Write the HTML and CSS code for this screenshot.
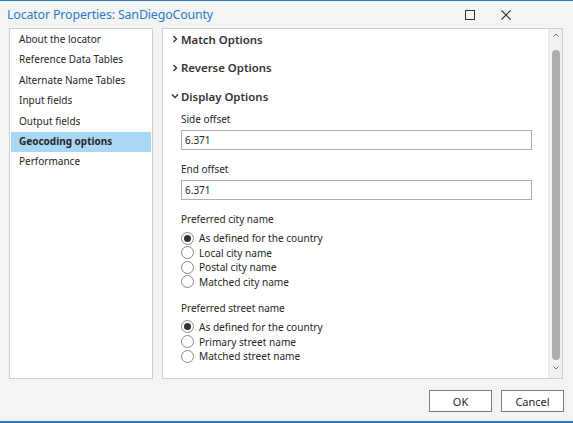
FILE: index.html
```html
<!DOCTYPE html>
<html>
<head>
<meta charset="utf-8">
<link rel="stylesheet" href="styles.css">
</head>
<body>
<div class="window">
  <div class="titlebar">
    <div class="title">Locator Properties: SanDiegoCounty</div>
    <div class="controls">
      <svg class="ctl" width="10" height="10" viewBox="0 0 10 10"><rect x="0.5" y="0.5" width="9" height="9" fill="none" stroke="#333" stroke-width="1"/></svg>
      <svg class="ctl close" width="10" height="10" viewBox="0 0 10 10"><path d="M0.5 0.5 L9.5 9.5 M9.5 0.5 L0.5 9.5" stroke="#333" stroke-width="1.1" fill="none"/></svg>
    </div>
  </div>
  <div class="main">
    <ul class="nav">
      <li>About the locator</li>
      <li>Reference Data Tables</li>
      <li>Alternate Name Tables</li>
      <li>Input fields</li>
      <li>Output fields</li>
      <li class="selected">Geocoding options</li>
      <li>Performance</li>
    </ul>
    <div class="content">
      <div class="scrollarea">
        <div class="section"><svg class="chev" width="8" height="8" viewBox="0 0 8 8"><path d="M2.5 1 L5.5 4 L2.5 7" stroke="#333" stroke-width="1.4" fill="none"/></svg>Match Options</div>
        <div class="section"><svg class="chev" width="8" height="8" viewBox="0 0 8 8"><path d="M2.5 1 L5.5 4 L2.5 7" stroke="#333" stroke-width="1.4" fill="none"/></svg>Reverse Options</div>
        <div class="section"><svg class="chev" width="8" height="8" viewBox="0 0 8 8"><path d="M1 2.5 L4 5.5 L7 2.5" stroke="#333" stroke-width="1.4" fill="none"/></svg>Display Options</div>
        <div class="group">
          <div class="label first">Side offset</div>
          <div class="input">6.371</div>
          <div class="label">End offset</div>
          <div class="input">6.371</div>
          <div class="label">Preferred city name</div>
          <div class="radios">
            <div class="radio checked"><span class="dot"></span>As defined for the country</div>
            <div class="radio"><span class="dot"></span>Local city name</div>
            <div class="radio"><span class="dot"></span>Postal city name</div>
            <div class="radio"><span class="dot"></span>Matched city name</div>
          </div>
          <div class="label after-radios">Preferred street name</div>
          <div class="radios">
            <div class="radio checked"><span class="dot"></span>As defined for the country</div>
            <div class="radio"><span class="dot"></span>Primary street name</div>
            <div class="radio"><span class="dot"></span>Matched street name</div>
          </div>
        </div>
      </div>
      <div class="scrollbar">
        <svg class="arrow" width="8" height="6" viewBox="0 0 8 6"><path d="M1.5 4.5 L4 2 L6.5 4.5" stroke="#777" stroke-width="1" fill="none"/></svg>
        <div class="thumb"></div>
        <svg class="arrow" width="8" height="6" viewBox="0 0 8 6"><path d="M1.5 1.5 L4 4 L6.5 1.5" stroke="#777" stroke-width="1" fill="none"/></svg>
      </div>
    </div>
  </div>
  <div class="footer">
    <button class="btn">OK</button>
    <button class="btn">Cancel</button>
  </div>
</div>
</body>
</html>
```
FILE: styles.css
```css
* { box-sizing: border-box; }
html, body { margin: 0; padding: 0; }
body {
  width: 573px;
  height: 423px;
  overflow: hidden;
  background: #f3f4f4;
  font-family: "Noto Sans", "Open Sans", sans-serif;
  color: #262626;
}
.window {
  width: 573px;
  height: 423px;
  display: flex;
  flex-direction: column;
  border-top: 1px solid #2a7bc4;
  border-bottom: 2px solid #2a7bc4;
}
.titlebar {
  height: 27px;
  display: flex;
  align-items: center;
  justify-content: space-between;
  padding: 0 0 0 7px;
}
.title {
  color: #2a7bc4;
  font-size: 12.4px;
  letter-spacing: -0.15px;
  margin-top: -1px;
}
.controls {
  display: flex;
  align-items: center;
  gap: 26px;
  padding-right: 62px;
  margin-top: 1px;
}
.controls .ctl { display: block; }
.main {
  height: 351px;
  display: flex;
  gap: 9px;
  padding: 0 10px 0 9px;
}
.nav {
  list-style: none;
  margin: 0;
  padding: 1px 1px 0 1px;
  width: 145px;
  background: #fff;
  border: 1px solid #cfcfcf;
  font-size: 10px;
}
.nav li {
  height: 20.4px;
  line-height: 19px;
  padding-left: 8px;
  white-space: nowrap;
}
.nav li.selected {
  background: #a9d7f4;
  font-weight: bold;
}
.content {
  flex: 1;
  background: #fff;
  border: 1px solid #cfcfcf;
  display: flex;
}
.scrollarea {
  flex: 1;
  padding: 0 0 0 8px;
}
.section {
  height: 20px;
  margin-top: 8.5px;
  display: flex;
  align-items: center;
  font-size: 11.4px;
  font-weight: 600;
  color: #333;
}
.section:first-child { margin-top: 0; }
.chev { margin-right: 2px; display: block; }
.group {
  padding-left: 10px;
  padding-right: 16px;
  font-size: 10px;
}
.label {
  height: 20px;
  line-height: 20px;
  margin-top: 9px;
}
.label.first { margin-top: 3px; }
.label.after-radios { margin-top: 8.6px; }
.input {
  height: 20px;
  border: 1px solid #adadad;
  line-height: 18px;
  padding-left: 3px;
  margin-top: 1px;
  width: 351px;
}
.radios { margin-top: 1.7px; }
.radio {
  height: 14.67px;
  display: flex;
  align-items: center;
  white-space: nowrap;
  font-size: 10.1px;
}
.dot {
  width: 13px;
  height: 13px;
  border: 1px solid #8a8a8a;
  border-radius: 50%;
  margin-right: 5px;
  display: flex;
  align-items: center;
  justify-content: center;
  background: #fff;
}
.radio.checked .dot::after {
  content: "";
  width: 7px;
  height: 7px;
  border-radius: 50%;
  background: #333;
}
.scrollbar {
  width: 14px;
  background: #f0f0f0;
  border-left: 1px solid #e6e6e6;
  display: flex;
  flex-direction: column;
  align-items: center;
  padding: 3px 0 7px;
}
.arrow { display: block; }
.thumb {
  width: 8px;
  flex: 1;
  background: #acacac;
  border-radius: 4px;
  margin: 12px 0 5px;
}
.footer {
  flex: 1;
  display: flex;
  justify-content: flex-end;
  align-items: flex-start;
  gap: 9px;
  padding: 11px 9px 0 0;
}
.btn {
  width: 63px;
  height: 22px;
  background: #fff;
  border: 1px solid #7a7a7a;
  font-family: "Noto Sans", "Open Sans", sans-serif;
  font-size: 11px;
  color: #262626;
  padding: 0;
}
```
